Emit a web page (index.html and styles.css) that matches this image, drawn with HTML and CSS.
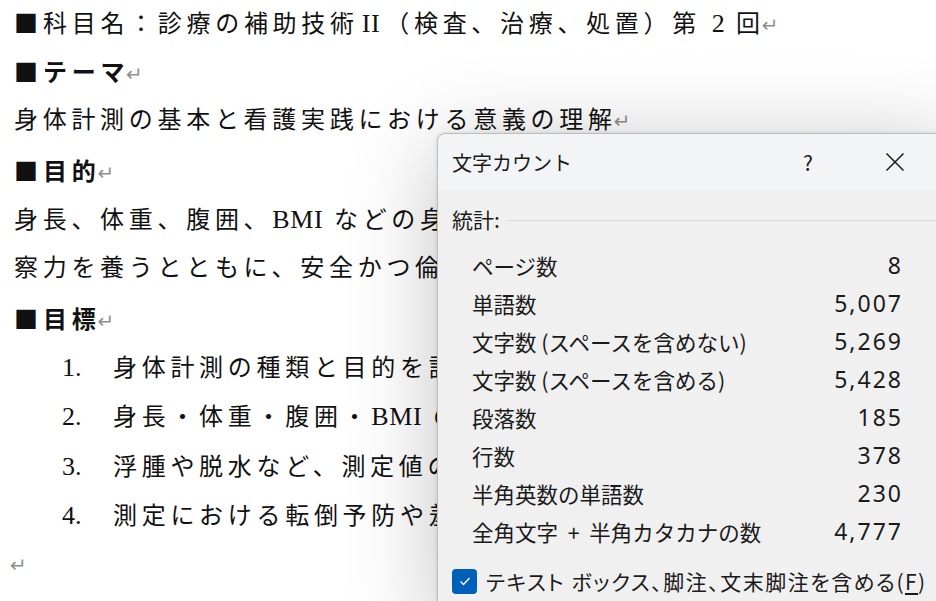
FILE: index.html
```html
<!DOCTYPE html>
<html lang="ja">
<head>
	<meta charset="UTF-8">
	<title>文字カウント</title>
	<link rel="stylesheet" href="styles.css">
</head>
<body>
	<!-- 文書 -->
	<div class="doc">
		<p><span class="sq">■</span>科目名：診療の補助技術<span class="lat roman">II</span>（検査、治療、処置）第 <span class="lat">2</span> 回<span class="mark">↵</span></p>
		<p class="head"><span class="sq">■</span>テーマ<span class="mark">↵</span></p>
		<p>身体計測の基本と看護実践における意義の理解<span class="mark">↵</span></p>
		<p class="head"><span class="sq">■</span>目的<span class="mark">↵</span></p>
		<p>身長、体重、腹囲、<span class="lat">BMI</span> などの身体計測の方法を理解し、測定結果から対象の健康状態を読み取る観</p>
		<p>察力を養うとともに、安全かつ倫理的な援助を実践する態度を身につける。<span class="mark">↵</span></p>
		<p class="head"><span class="sq">■</span>目標<span class="mark">↵</span></p>
		<ol class="goals">
			<li><span class="num">1.</span>身体計測の種類と目的を説明できる。<span class="mark">↵</span></li>
			<li><span class="num">2.</span>身長・体重・腹囲・<span class="lat">BMI</span> の測定方法を説明できる。<span class="mark">↵</span></li>
			<li><span class="num">3.</span>浮腫や脱水など、測定値の変化の意味を考えられる。<span class="mark">↵</span></li>
			<li><span class="num">4.</span>測定における転倒予防や羞恥心への配慮を述べられる。<span class="mark">↵</span></li>
		</ol>
		<p class="blank"><span class="mark">↵</span></p>
	</div>

	<!-- 文字カウント ダイアログ -->
	<div class="dialog">
		<div class="titlebar">
			<span class="title">文字カウント</span>
			<span class="help">?</span>
			<span class="close">
				<svg width="20" height="20" viewBox="0 0 20 20"><path d="M1.5 1.5 L18.5 18.5 M18.5 1.5 L1.5 18.5" stroke="#1a1a1a" stroke-width="1.5" fill="none"/></svg>
			</span>
		</div>
		<div class="body">
			<div class="group">
				<span>統計:</span>
				<span class="rule"></span>
			</div>
			<table class="stats">
				<tr><td>ページ数</td><td>8</td></tr>
				<tr><td>単語数</td><td>5,007</td></tr>
				<tr><td>文字数 (スペースを含めない)</td><td>5,269</td></tr>
				<tr><td>文字数 (スペースを含める)</td><td>5,428</td></tr>
				<tr><td>段落数</td><td>185</td></tr>
				<tr><td>行数</td><td>378</td></tr>
				<tr><td>半角英数の単語数</td><td>230</td></tr>
				<tr><td>全角文字&nbsp; +&nbsp; 半角カタカナの数</td><td>4,777</td></tr>
			</table>
			<label class="check">
				<span class="box">
					<svg width="14" height="14" viewBox="0 0 14 14"><path d="M2.5 7.5 L5.5 10.5 L11.5 4" stroke="#fff" stroke-width="1.4" fill="none"/></svg>
				</span>
				<span>テキスト ボックス、脚注、文末脚注を含める(<u>F</u>)</span>
			</label>
		</div>
	</div>
</body>
</html>
```

FILE: styles.css
```css
*{margin:0;padding:0;}
html, body {
	width: 936px;
	height: 601px;
	overflow: hidden;
	background: #fff;
}
body {
	position: relative;
}
.doc {
	padding: 0 0 0 14px;
	margin-top: -3px;
	font-family: "Liberation Serif", "Noto Sans CJK JP", serif;
	font-size: 24px;
	line-height: 49.4px;
	color: #111;
	letter-spacing: 4.7px;
	white-space: nowrap;
}
.doc p, .goals li {
	height: 49.4px;
}
.doc .sq {
	font-family: "Noto Sans CJK JP", sans-serif;
	font-weight: normal;
	letter-spacing: 5px;
}
.doc .lat {
	letter-spacing: 0.6px;
	font-size: 26px;
}
.doc .roman {
	margin: 0 5px 0 3px;
}
.doc .head {
	font-weight: bold;
}
.mark {
	font-family: "DejaVu Sans", sans-serif;
	font-weight: normal;
	font-size: 20px;
	color: #8f8f8f;
	letter-spacing: 0;
	margin-left: -3px;
}
.goals {
	list-style: none;
	padding-left: 48px;
}
.goals .num {
	display: inline-block;
	width: 51px;
	letter-spacing: 0;
	font-size: 26px;
}
.blank .mark {
	margin-left: -4px;
}

/* dialog */
.dialog {
	position: absolute;
	left: 437px;
	top: 133px;
	width: 520px;
	height: 490px;
	border: 1px solid #bdbdbd;
	border-radius: 8px 0 0 0;
	background: #f0f0f0;
	box-shadow: 0 12px 90px rgba(0,0,0,.24), 0 0 4px rgba(0,0,0,.12);
	font-family: "Noto Sans CJK JP", "Noto Sans", sans-serif;
	color: #1a1a1a;
	overflow: hidden;
}
.titlebar {
	height: 56px;
	display: flex;
	align-items: center;
	padding-left: 14px;
	background: #f3f4f6;
	border-radius: 8px 0 0 0;
}
.title {
	font-size: 20px;
	flex: 1;
}
.help {
	font-size: 21px;
	width: 20px;
	margin-right: 62px;
}
.close {
	display: flex;
	width: 20px;
	margin-right: 53px;
}
.body {
	padding: 11px 0 0 14px;
}
.group {
	display: flex;
	align-items: center;
	gap: 8px;
	font-size: 21px;
	height: 36px;
}
.rule {
	flex: 1;
	height: 1px;
	background: #d9d9d9;
	margin-top: 2px;
}
.stats {
	border-collapse: collapse;
	margin: 9px 0 0 20px;
	width: 429px;
	font-size: 21.5px;
}
.stats td {
	height: 38px;
	padding: 0;
	white-space: nowrap;
}
.stats td:last-child {
	text-align: right;
	font-family: "Noto Sans", sans-serif;
	font-size: 23px;
	letter-spacing: 2px;
	padding-right: 0;
	position: relative;
	left: 2px;
}
.check {
	display: flex;
	align-items: center;
	gap: 9px;
	margin-top: 16px;
	font-size: 21px;
	font-feature-settings: "palt";
	letter-spacing: 1.5px;
	white-space: nowrap;
}
.check .box {
	width: 25px;
	height: 25px;
	border-radius: 4px;
	background: #005fb8;
	display: flex;
	align-items: center;
	justify-content: center;
}
.check u {
	text-underline-offset: 3px;
}
```
